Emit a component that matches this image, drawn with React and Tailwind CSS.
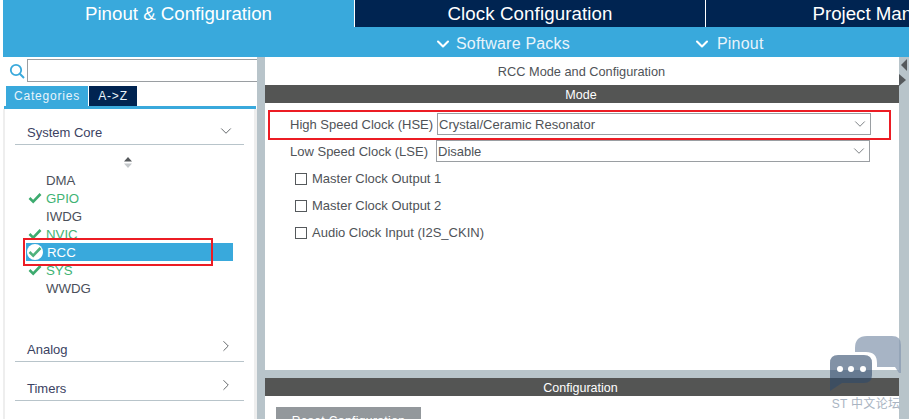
import React from "react";
import { ChevronDown, ChevronRight } from "lucide-react";

const font = { fontFamily: '"Liberation Sans", "Noto Sans CJK SC", sans-serif' };

const peripherals = [
  { name: "DMA" },
  { name: "GPIO", ok: true },
  { name: "IWDG" },
  { name: "NVIC", ok: true },
  { name: "RCC", ok: true, selected: true },
  { name: "SYS", ok: true },
  { name: "WWDG" },
];

function Check({ white }) {
  return (
    <svg width="14" height="12" viewBox="0 0 14 12" className="shrink-0">
      <path
        d="M1.5 6 L5.2 9.6 L12.5 2"
        fill="none"
        stroke={white ? "#4fb27c" : "#3dab6f"}
        strokeWidth="2.6"
      />
    </svg>
  );
}

function PeripheralRow({ item }) {
  if (item.selected) {
    return (
      <div className="relative z-10 flex h-[18px] w-[207px] items-center bg-[#39a9dc] text-white">
        <span className="ml-[1px] flex h-[16px] w-[16px] items-center justify-center rounded-full bg-white">
          <Check white />
        </span>
        <span className="ml-[4px] pt-[1px] text-[13.25px] leading-[18px]">{item.name}</span>
      </div>
    );
  }
  return (
    <div className={`flex h-[18px] items-center ${item.ok ? "text-[#3fb374]" : "text-[#4a4f5a]"}`}>
      <span className="flex w-[20px] justify-start pl-[2px]">{item.ok && <Check />}</span>
      <span className="pt-[1px] text-[13.25px] leading-[18px]">{item.name}</span>
    </div>
  );
}

function Section({ label, open, className }) {
  return (
    <div className={`mx-[10px] flex items-center justify-between border-b-[1.5px] border-[#b8c4ca] pl-[12px] pr-[9px] ${className}`}>
      <span className="pt-[1px] text-[13px] text-[#3b4262]">{label}</span>
      {open ? (
        <ChevronDown size={18} strokeWidth={1.2} className="mb-[3px] text-[#55595c]" />
      ) : (
        <ChevronRight size={18} strokeWidth={1.2} className="mb-[6px] text-[#55595c]" />
      )}
    </div>
  );
}

function Sidebar() {
  return (
    <div className="flex w-[257px] shrink-0 flex-col">
      <div className="flex h-[29px] items-start pt-[2px]">
        <svg width="16" height="16" viewBox="0 0 16 16" className="ml-[9px] mt-[4px] mr-[2px]">
          <circle cx="7" cy="7" r="5.2" fill="none" stroke="#39a9dc" strokeWidth="1.8" />
          <path d="M10.8 10.8 L15 15" stroke="#39a9dc" strokeWidth="2" />
        </svg>
        <div className="h-[23px] flex-1 border-[1.5px] border-r-0 border-[#9a9ea2] bg-white" />
      </div>
      <div className="flex h-[20px] pl-[6px] text-[12px] tracking-[0.8px] text-[#e8f4fb]">
        <div className="flex w-[82px] items-center justify-center bg-[#39a9dc]">Categories</div>
        <div className="ml-[1px] flex w-[48px] items-center justify-center bg-[#002451]">A-&gt;Z</div>
      </div>
      <div className="ml-[4px] mr-[1px] h-[3px] bg-[#39a9dc]" />
      <div className="mx-[3px] mr-0 flex-1 border-x-[2px] border-r-[3px] border-[#eeeeee] bg-white">
        <Section label="System Core" open className="mt-[12px] h-[24px]" />
        <div className="flex h-[26px] justify-center pr-[4px] pt-[12px]">
          <svg width="8" height="11" viewBox="0 0 8 11">
            <path d="M4 0 L8 4.5 H0 Z" fill="#55595c" />
            <path d="M4 11 L8 6.5 H0 Z" fill="#c4c8cb" />
          </svg>
        </div>
        <div className="ml-[21px] flex flex-col">
          {peripherals.map((item) => (
            <PeripheralRow key={item.name} item={item} />
          ))}
        </div>
        <Section label="Analog" className="mt-[40px] h-[25px]" />
        <Section label="Timers" className="mt-[14px] h-[25px]" />
      </div>
    </div>
  );
}

function SelectRow({ label, value, className, labelWidth }) {
  return (
    <div className={`flex items-center ${className}`}>
      <span className={`whitespace-nowrap pt-[1px] text-[13px] text-[#4f5358] ${labelWidth}`}>{label}</span>
      <div className="flex h-[22px] w-[434px] items-center justify-between border-[1.5px] border-[#9a9ea2] pl-[1px] pr-[1px] text-[13px] text-[#4f5358]">
        <span className="pt-[1px]">{value}</span>
        <ChevronDown size={18} strokeWidth={1.2} className="text-[#6f7478]" />
      </div>
    </div>
  );
}

function CheckRow({ label }) {
  return (
    <div className="flex h-[27px] items-center pl-[30px]">
      <span className="h-[12px] w-[12px] border-[1.5px] border-[#55595c]" />
      <span className="ml-[5px] text-[13px] text-[#4f5358]">{label}</span>
    </div>
  );
}

function Main() {
  return (
    <div className="flex flex-1 flex-col">
      <div className="flex h-[313px] flex-col bg-white">
        <div className="flex h-[28px] items-center justify-center pr-[1px] pt-[1px] text-[12.75px] text-[#4f5358]">
          RCC Mode and Configuration
        </div>
        <div className="flex h-[18px] items-center justify-center bg-[#545554] pr-[2px] pt-[2px] text-[12.5px] text-white">Mode</div>
        <SelectRow
          label="High Speed Clock (HSE)"
          value="Crystal/Ceramic Resonator"
          className="mt-[10px] pl-[25px]"
          labelWidth="w-[147px]"
        />
        <SelectRow
          label="Low Speed Clock (LSE)"
          value="Disable"
          className="mt-[5px] pl-[25px]"
          labelWidth="w-[146px]"
        />
        <div className="mt-[3px] flex flex-col">
          <CheckRow label="Master Clock Output 1" />
          <CheckRow label="Master Clock Output 2" />
          <CheckRow label="Audio Clock Input (I2S_CKIN)" />
        </div>
      </div>
      <div className="h-[8px] bg-[#b8c4ca]" />
      <div className="flex h-[18px] items-center justify-center bg-[#545554] pr-[3px] pt-[2px] text-[12.5px] text-white">Configuration</div>
      <div className="flex-1 bg-white pl-[11px] pt-[11px]">
        <div className="flex h-[30px] w-[145px] justify-center bg-[#93989c] pt-[5px] text-[12px] tracking-[0.4px] text-white">
          Reset Configuration
        </div>
      </div>
    </div>
  );
}

function ChatLogo() {
  return (
    <div className="absolute left-[830px] top-[336px] flex w-[72px] flex-col items-center">
      <svg width="72" height="56" viewBox="0 0 72 56">
        <path
          d="M25 12 Q25 0 37 0 H62 Q71 0 71 9 V37 H69 L65 31 H47 V27 Q47 16 36 16 H25 Z"
          fill="#8a9bb2"
          fillOpacity="0.75"
        />
        <path
          d="M0 27 Q0 19 8 19 H34 Q42 19 42 27 V39 Q42 47 34 47 H12 L0 55 Z"
          fill="#2f4a6b"
          fillOpacity="0.6"
        />
        <circle cx="10" cy="33" r="3" fill="#ffffff" />
        <circle cx="21" cy="33" r="3" fill="#ffffff" />
        <circle cx="33" cy="33" r="3" fill="#ffffff" />
      </svg>
      <span className="mt-[4px] whitespace-nowrap text-[12px] leading-[16px] tracking-[0.3px] text-[#a9b4c2]">ST 中文论坛</span>
    </div>
  );
}

export default function App() {
  return (
    <div className="relative flex h-[419px] w-[909px] flex-col overflow-hidden bg-white" style={font}>
      <div className="flex h-[27px] shrink-0 pl-[3px] text-[18.7px] text-white">
        <div className="flex w-[351px] shrink-0 items-center justify-center whitespace-nowrap bg-[#39a9dc] pt-[1px]">Pinout &amp; Configuration</div>
        <div className="ml-[1px] flex w-[350px] shrink-0 items-center justify-center whitespace-nowrap bg-[#002451] pt-[1px] tracking-[0.1px]">Clock Configuration</div>
        <div className="ml-[1px] flex w-[350px] shrink-0 items-center justify-center whitespace-nowrap bg-[#002451] pt-[1px]">Project Manager</div>
      </div>
      <div className="ml-[3px] flex h-[30px] shrink-0 items-center bg-[#39a9dc] pl-[431px] pt-[3px] text-[16px] text-[#e8f4fb]">
        <ChevronDown size={20} strokeWidth={2.5} className="-ml-[1px] text-white" />
        <span className="ml-[3px] tracking-[0.2px]">Software Packs</span>
        <ChevronDown size={20} strokeWidth={2.5} className="ml-[122px] text-white" />
        <span className="ml-[5px] tracking-[0.2px]">Pinout</span>
      </div>
      <div className="flex flex-1">
        <Sidebar />
        <div className="w-[8px] shrink-0 bg-[#b8c4ca]" />
        <Main />
        <div className="flex w-[10px] shrink-0 flex-col items-center bg-[#b8c4ca] pt-[1px]">
          <svg width="10" height="28" viewBox="0 0 10 28">
            <path d="M8 1 V13 L2 7 Z" fill="#55595c" />
            <path d="M0 16 V28 L7 22 Z" fill="#55595c" />
          </svg>
        </div>
      </div>
      <div className="absolute left-[268px] top-[110px] h-[30px] w-[623px] border-2 border-[#ec1c24]" />
      <div className="absolute left-[23px] top-[238px] z-20 h-[28px] w-[190px] border-2 border-[#ec1c24]" />
      <ChatLogo />
    </div>
  );
}
